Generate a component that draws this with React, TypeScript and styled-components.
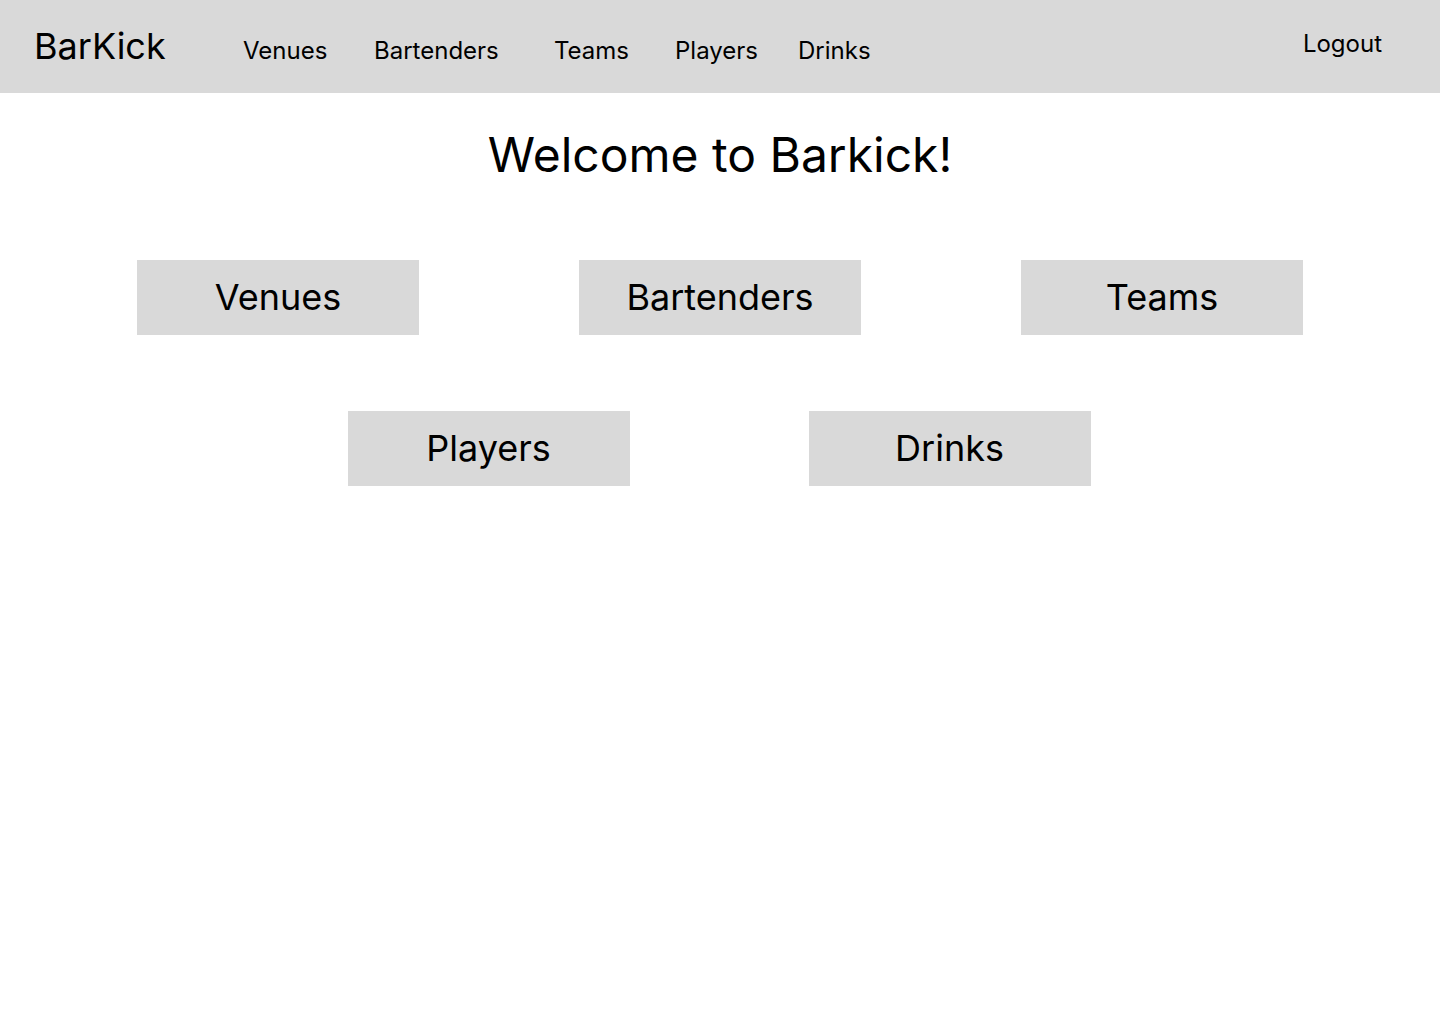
import React from "react";
import styled, { createGlobalStyle } from "styled-components";

const GlobalStyle = createGlobalStyle`
  html, body {
    margin: 0;
    padding: 0;
    background: #ffffff;
    font-family: Inter, "Noto Sans", sans-serif;
    color: #000000;
  }
  * { box-sizing: border-box; }
`;

const Page = styled.div`
  width: 1440px;
  min-height: 1024px;
  background: #ffffff;
`;

const Header = styled.header`
  display: flex;
  align-items: baseline;
  height: 93px;
  padding: 24px 58px 0 34px;
  background: #d9d9d9;
`;

const Logo = styled.div`
  width: 209px;
  font-size: 36px;
  font-weight: 400;
  line-height: normal;
`;

const Nav = styled.nav`
  display: flex;
  align-items: baseline;
`;

const NavLink = styled.a<{ $slot: number }>`
  width: ${(p) => p.$slot}px;
  font-size: 24px;
  line-height: normal;
  color: #000000;
  text-decoration: none;
  cursor: pointer;
`;

const Logout = styled.a`
  margin-left: auto;
  align-self: flex-start;
  margin-top: 5px;
  font-size: 24px;
  line-height: normal;
  color: #000000;
  text-decoration: none;
  cursor: pointer;
`;

const Main = styled.main`
  display: flex;
  flex-direction: column;
  align-items: center;
  padding-top: 33px;
`;

const Title = styled.h1`
  margin: 0 0 76px;
  font-size: 48px;
  font-weight: 400;
  line-height: 58px;
`;

const Row = styled.div<{ $gap: number; $nudge?: number }>`
  display: flex;
  justify-content: center;
  gap: ${(p) => p.$gap}px;
  margin-bottom: 76px;
  padding-right: ${(p) => p.$nudge ?? 0}px;
`;

const Tile = styled.button`
  width: 282px;
  height: 75px;
  display: flex;
  align-items: center;
  justify-content: center;
  border: none;
  padding: 0 0 2px;
  background: #d9d9d9;
  font-family: Inter, "Noto Sans", sans-serif;
  font-size: 36px;
  font-weight: 400;
  line-height: normal;
  color: #000000;
  cursor: pointer;
`;

const navItems: [string, number][] = [
  ["Venues", 131],
  ["Bartenders", 180],
  ["Teams", 121],
  ["Players", 123],
  ["Drinks", 100],
];

export default function App() {
  return (
    <Page>
      <GlobalStyle />
      <Header>
        <Logo>BarKick</Logo>
        <Nav>
          {navItems.map(([label, slot]) => (
            <NavLink key={label} $slot={slot}>
              {label}
            </NavLink>
          ))}
        </Nav>
        <Logout>Logout</Logout>
      </Header>
      <Main>
        <Title>Welcome to Barkick!</Title>
        <Row $gap={160}>
          <Tile>Venues</Tile>
          <Tile>Bartenders</Tile>
          <Tile>Teams</Tile>
        </Row>
        <Row $gap={179} $nudge={2}>
          <Tile>Players</Tile>
          <Tile>Drinks</Tile>
        </Row>
      </Main>
    </Page>
  );
}
